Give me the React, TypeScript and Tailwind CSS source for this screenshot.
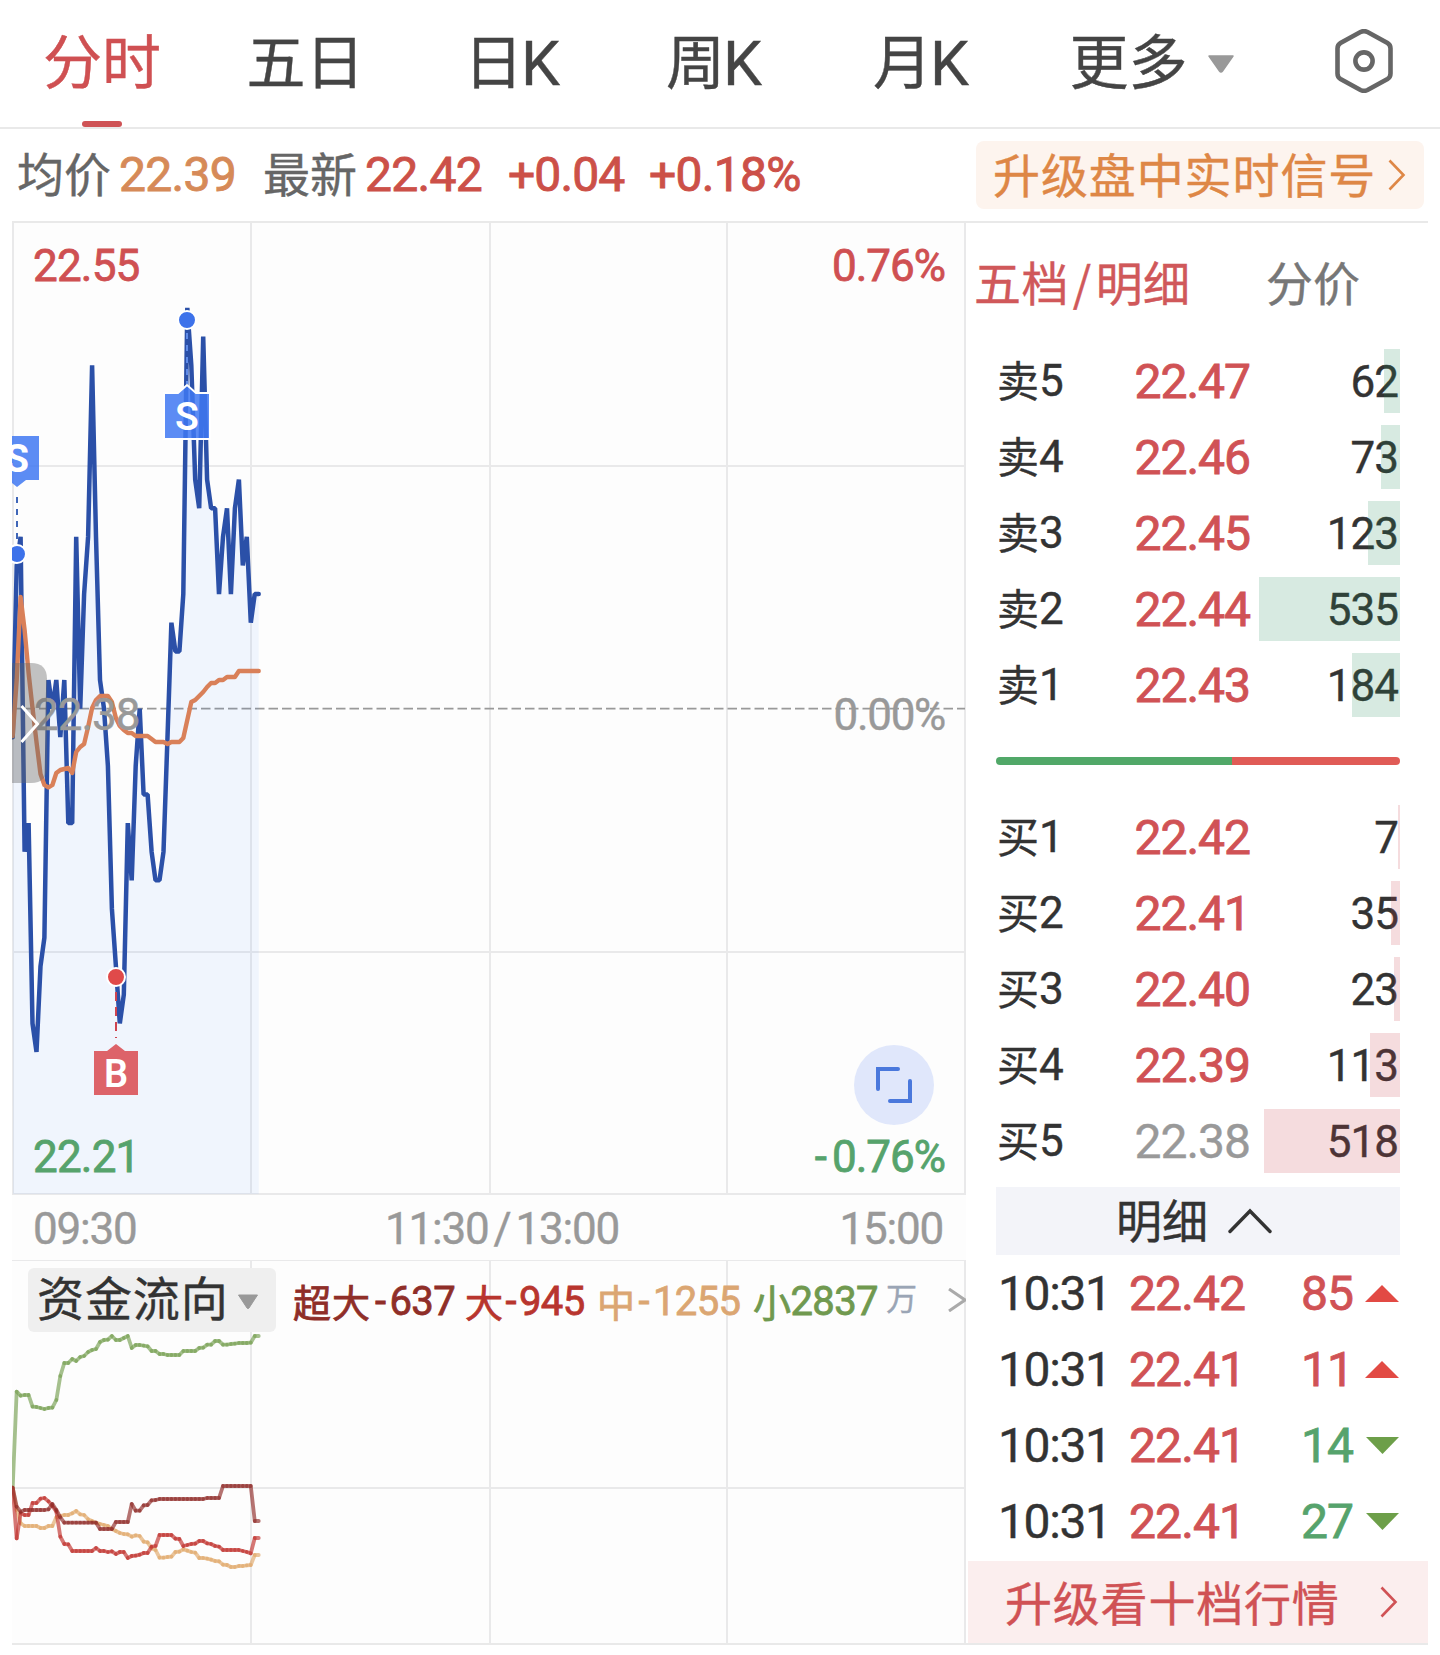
import clsx from 'clsx'

const TABS = ['五日', '日K', '周K', '月K']

const ASKS = [
  { label: '卖', level: 5, price: '22.47', volume: 62, bar: 16 },
  { label: '卖', level: 4, price: '22.46', volume: 73, bar: 19 },
  { label: '卖', level: 3, price: '22.45', volume: 123, bar: 32 },
  { label: '卖', level: 2, price: '22.44', volume: 535, bar: 141 },
  { label: '卖', level: 1, price: '22.43', volume: 184, bar: 48 },
]

const BIDS = [
  { label: '买', level: 1, price: '22.42', volume: 7, bar: 2 },
  { label: '买', level: 2, price: '22.41', volume: 35, bar: 9 },
  { label: '买', level: 3, price: '22.40', volume: 23, bar: 6 },
  { label: '买', level: 4, price: '22.39', volume: 113, bar: 30 },
  { label: '买', level: 5, price: '22.38', volume: 518, bar: 136 },
]

const TRADES = [
  { time: '10:31', price: '22.42', volume: 85, up: true },
  { time: '10:31', price: '22.41', volume: 11, up: true },
  { time: '10:31', price: '22.41', volume: 14, up: false },
  { time: '10:31', price: '22.41', volume: 27, up: false },
]

// price of every minute, in cents away from the previous close
const PRICE = [
  -1, 5, 6, -5, -4, -11, -12, -9, -8, 1, 0, 1, -1, 1, -4, -4, 6, 0, 4, 6, 12, 6, 1, 0, -2, -7, -9, -11, -10, -4, -6,
  -2, 0, -3, -3, -5, -6, -6, -5, -1, 3, 2, 2, 4, 14, 12, 8, 7, 13, 8, 7, 7, 4, 6, 7, 4, 7, 8, 5, 6, 3, 4, 4,
]

const AVERAGE = [
  736, 680, 597, 630, 673, 708, 742, 774, 785, 787.5, 785, 773, 770, 769, 768, 773, 752, 747, 744, 727, 708, 700, 696,
  696, 696, 702, 718, 726, 730, 733, 733, 736, 736, 736, 736, 739, 742, 742, 742, 744, 742, 742, 742, 738, 720, 702,
  700, 696, 692, 687, 683, 683, 680, 680, 677, 677, 677, 671, 671, 671, 671, 671, 671,
]

// money flow, thirds of a pixel below the pane's origin
const FLOWS = [
  {
    color: '#e0a868',
    points: [
      983, 1050, 1090, 1098, 1098, 1098, 1098, 1104, 1104, 1098, 1098, 1072, 1068, 1065, 1065, 1060, 1053, 1063, 1065,
      1078, 1083, 1088, 1092, 1095, 1098, 1107, 1113, 1119, 1122, 1123, 1130, 1126, 1128, 1145, 1147, 1165, 1170, 1193,
      1193, 1191, 1190, 1176, 1175, 1168, 1172, 1176, 1178, 1194, 1194, 1196, 1199, 1203, 1204, 1214, 1215, 1221, 1221,
      1218, 1218, 1216, 1215, 1185, 1185,
    ],
  },
  {
    color: '#76a052',
    points: [
      983, 695, 707, 705, 705, 740, 741, 744, 747, 744, 743, 720, 648, 609, 609, 597, 603, 591, 588, 576, 570, 567, 546,
      540, 539, 528, 540, 540, 534, 528, 564, 555, 555, 557, 559, 573, 573, 582, 582, 585, 585, 585, 585, 573, 573, 573,
      573, 564, 563, 554, 554, 543, 543, 554, 554, 552, 551, 549, 549, 549, 548, 528, 528,
    ],
  },
  {
    color: '#c0302b',
    points: [
      983, 1135, 1060, 1065, 1065, 1029, 1029, 1016, 1014, 1024, 1038, 1055, 1130, 1152, 1153, 1173, 1173, 1173, 1173,
      1173, 1173, 1164, 1173, 1173, 1176, 1174, 1182, 1176, 1176, 1194, 1188, 1187, 1184, 1179, 1179, 1160, 1158, 1125,
      1125, 1125, 1125, 1136, 1137, 1158, 1155, 1152, 1151, 1143, 1143, 1150, 1152, 1158, 1160, 1170, 1170, 1170, 1170,
      1170, 1173, 1176, 1180, 1134, 1134,
    ],
  },
  {
    color: '#8f2a26',
    points: [
      983, 1040, 1055, 1050, 1050, 1050, 1050, 1050, 1050, 1048, 1032, 1050, 1072, 1088, 1088, 1088, 1088, 1088, 1088,
      1088, 1088, 1088, 1107, 1107, 1107, 1107, 1086, 1086, 1086, 1086, 1032, 1052, 1052, 1036, 1035, 1021, 1020, 1017,
      1017, 1017, 1017, 1017, 1017, 1017, 1017, 1017, 1017, 1017, 1017, 1014, 1014, 1014, 1014, 978, 978, 978, 978, 978,
      978, 978, 978, 1083, 1083,
    ],
  },
]

const CLOSE_Y = 708.6
const minuteX = (i: number) => 12.7 + i * 3.968
const priceY = (cents: number) => CLOSE_Y - cents * 28.62
const flowY = (value: number) => 1160 + value / 3

const toPoints = (ys: number[]) => ys.map((y, i) => `${minuteX(i).toFixed(1)},${y.toFixed(1)}`).join(' ')

const Cn = ({ children, className }: { children: React.ReactNode; className?: string }) => (
  <span className={clsx("font-['Noto_Sans_CJK_SC',sans-serif] whitespace-nowrap", className)}>{children}</span>
)

const Chevron = ({ className }: { className?: string }) => (
  <svg width="18" height="32" viewBox="0 0 18 32" fill="none" stroke="currentColor" strokeWidth="2.6" className={className}>
    <path d="M1.5 1.5L15.5 16L1.5 30.5" />
  </svg>
)

const Tabs = () => (
  <nav className="grid h-[129px] grid-cols-[204px_203px_210px_194px_220px_238px_171px] border-b-2 border-[#e9e9e9] text-[59px] leading-[118px] text-[#444]">
    <div className="flex flex-col items-center text-[#cf5052]">
      <Cn className="h-[121px]">分时</Cn>
      <span className="h-1.5 w-10 rounded-full bg-[#cf5356]"></span>
    </div>
    {TABS.map((tab) => (
      <div key={tab} className="flex justify-center">
        <Cn>{tab.replace('K', '')}</Cn>
        {tab.endsWith('K') && <span className="-ml-0.5 text-[62px] leading-[127px]">K</span>}
      </div>
    ))}
    <div className="flex justify-center gap-[19px] pl-1">
      <Cn>更多</Cn>
      <svg width="28" height="18" viewBox="0 0 28 18" className="mt-[55px]">
        <path d="M2 1H26L15.5 16Q14 18 12.5 16Z" fill="#999" stroke="#999" strokeWidth="1.5" strokeLinejoin="round" />
      </svg>
    </div>
    <div className="flex justify-center pt-[29px] pl-[19px]">
      <svg width="60" height="64" viewBox="0 0 60 64" fill="none" stroke="#666" strokeWidth="4.6">
        <path d="M26.5 3Q30 1.2 33.5 3L53.5 14Q56.5 15.8 56.5 19.5V44.5Q56.5 48.2 53.5 50L33.5 61Q30 62.8 26.5 61L6.5 50Q3.5 48.2 3.5 44.5V19.5Q3.5 15.8 6.5 14Z" />
        <circle cx="30" cy="32" r="8.6" />
      </svg>
    </div>
  </nav>
)

const Summary = () => (
  <div className="flex h-[92px] items-center pl-[17px] text-[48px] text-[#cc5048]">
    <Cn className="-mt-1.5 w-[102px] text-[47px] text-[#666]">均价</Cn>
    <span className="w-[144px] tracking-[-0.7px] text-[#d68a58] [-webkit-text-stroke:0.9px]">22.39</span>
    <Cn className="-mt-1.5 w-[102px] text-[47px] text-[#666]">最新</Cn>
    <span className="w-[143px] tracking-[-0.7px] [-webkit-text-stroke:0.9px]">22.42</span>
    <span className="w-[141px] tracking-[-0.9px] [-webkit-text-stroke:0.9px]">+0.04</span>
    <span className="tracking-[-0.7px] [-webkit-text-stroke:0.9px]">+0.18%</span>
    <div className="mr-4 ml-auto flex h-[68px] w-[448px] items-center rounded-lg bg-[#fdf4ee] pl-[17px] text-[#de8746]">
      <Cn className="-mt-1 text-[47px] leading-[66px] tracking-[0.9px]">升级盘中实时信号</Cn>
      <Chevron className="ml-3" />
    </div>
  </div>
)

const PriceChart = () => (
  <div className="relative flex h-[972px] flex-col justify-between bg-[#fdfdfd] text-[44px] leading-[52px]">
    <svg width="954" height="972" viewBox="12 223 954 972" fill="none" className="absolute inset-0">
      <path d="M251 222V1195M490 222V1195M727 222V1195M12 466H966M12 952H966" stroke="#e9e9ea" strokeWidth="2" />
      <path d="M13 222V1194H965V222" stroke="#e9e9ea" strokeWidth="2" />
      <path d={`M12 ${CLOSE_Y}H965`} stroke="#999" strokeWidth="1.8" strokeDasharray="9.5 4" />
      <polygon
        points={`13,1194 ${toPoints(PRICE.map(priceY))} ${minuteX(62)},1194`}
        fill="#3c82ff"
        fillOpacity="0.068"
      />
      <polyline
        points={toPoints(PRICE.map(priceY))}
        stroke="#2b50a8"
        strokeWidth="4.5"
        strokeLinejoin="bevel"
        strokeLinecap="round"
      />
      <polyline points={toPoints(AVERAGE)} stroke="#d98059" strokeWidth="4.4" strokeLinejoin="round" strokeLinecap="round" />

      {/* sell at the open */}
      <path d="M17 497V546" stroke="#3f66b8" strokeWidth="2" strokeDasharray="6 6" />
      <circle cx="17" cy="554" r="9" fill="#3d72ea" stroke="#fff" strokeWidth="2" />
      <path d="M-5 436H39V480H26L17 487L8 480H-5Z" fill="#3f78f2" fillOpacity="0.85" />
      <text x="17" y="472" textAnchor="middle" fill="#fff" fontSize="39" fontWeight="700">S</text>

      {/* sell at the high */}
      <path d="M187 333V384" stroke="#5f8be8" strokeWidth="2" strokeDasharray="6 6" />
      <circle cx="187" cy="320" r="9" fill="#3d72ea" stroke="#fff" strokeWidth="2" />
      <path d="M164 393H178L187 385L196 393H210V439H164Z" fill="#3f78f2" fillOpacity="0.85" stroke="#fff" strokeWidth="2" />
      <text x="187" y="430" textAnchor="middle" fill="#fff" fontSize="39" fontWeight="600">S</text>

      {/* buy */}
      <path d="M116 992V1038" stroke="#cf4450" strokeWidth="2" strokeDasharray="9 6" />
      <circle cx="116" cy="977" r="9" fill="#e04a4a" stroke="#fff" strokeWidth="2" />
      <path d="M94 1051H107L116 1044L125 1051H138V1095H94Z" fill="#dd6369" />
      <text x="116" y="1086.5" textAnchor="middle" fill="#fff" fontSize="38" fontWeight="600">B</text>

      <circle cx="894" cy="1085" r="40" fill="#e0e7fb" />
      <path d="M898 1069H878V1089M910 1081V1101H890" stroke="#4a78dc" strokeWidth="4" strokeLinecap="round" />
    </svg>
    <div className="relative flex justify-between pt-[17px] pr-[21px] pl-[21px] tracking-[-0.8px] text-[#cf5052] [-webkit-text-stroke:0.8px]">
      <span>22.55</span>
      <span className="tracking-[-1px]">0.76%</span>
    </div>
    <div className="relative flex justify-between pt-1.5 pr-[21px] pl-[22px] tracking-[-1px] text-[#999]">
      <span>22.38</span>
      <span className="tracking-[-1.3px]">0.00%</span>
    </div>
    <div className="relative flex justify-between pr-[21px] pb-3 pl-[21px] tracking-[-0.8px] text-[#56a36c] [-webkit-text-stroke:0.8px]">
      <span>22.21</span>
      <span className="tracking-[-1px]"><span className="pr-1.5">-</span>0.76%</span>
    </div>
    <svg width="36" height="120" viewBox="12 663 36 120" fill="none" className="absolute top-[440px] left-0">
      <path d="M12 663H31Q47 663 47 679V767Q47 783 31 783H12Z" fill="#666" fillOpacity="0.4" />
      <path d="M21.5 706L37.5 724L21.5 742" stroke="#fff" strokeWidth="3" />
    </svg>
  </div>
)

const TimeAxis = () => (
  <div className="flex h-[65px] items-center justify-between bg-[#fdfdfd] pt-0.5 pr-[23px] pl-[21px] text-[44px] tracking-[-1.2px] text-[#999]">
    <span>09:30</span>
    <span className="pl-7">11:30<span className="px-[5px]">/</span>13:00</span>
    <span>15:00</span>
  </div>
)

const FlowChart = () => (
  <div className="relative h-[383px] overflow-hidden bg-[#fdfdfd]">
    <svg width="954" height="383" viewBox="12 1260 954 383" fill="none" className="absolute inset-0">
      <path d="M251 1260V1644M490 1260V1644M727 1260V1644M12 1488H966" stroke="#e9e9ea" strokeWidth="2" />
      <path d="M12 1260H966M965 1260V1644" stroke="#e9e9ea" strokeWidth="2" />
      {FLOWS.map(({ color, points }) => (
        <g key={color} stroke={color} strokeWidth="3.8" strokeLinecap="round" strokeOpacity="0.65">
          {points.slice(1).map((value, i) => (
            <line key={i} x1={minuteX(i)} y1={flowY(points[i])} x2={minuteX(i + 1)} y2={flowY(value)} />
          ))}
        </g>
      ))}
    </svg>
    <div className="relative flex items-center pt-2 pl-4 text-[40px] tracking-[-0.6px]">
      <div className="mr-[17px] flex h-16 w-[248px] shrink-0 items-center rounded-md bg-[#efefef] pl-[9px] text-[#333]">
        <Cn className="-mt-2 text-[47px] leading-[58px] tracking-[0.9px]">资金流向</Cn>
        <svg width="22" height="16" viewBox="0 0 22 16" className="mt-1 ml-2">
          <path d="M1.5 1H20.5L12 14Q11 15 10 14Z" fill="#999" stroke="#999" />
        </svg>
      </div>
      <span className="flex w-[172px] shrink-0 items-center pt-1 text-[#8f2e28] [-webkit-text-stroke:0.8px]">
        <Cn className="-mt-1 text-[38px] tracking-[1px]">超大</Cn><span className="px-1">-</span>637
      </span>
      <span className="flex w-[132px] shrink-0 items-center pt-1 text-[#b8352e] [-webkit-text-stroke:0.8px]">
        <Cn className="-mt-1 text-[38px]">大</Cn><span className="px-[3px]">-</span>945
      </span>
      <span className="flex w-[156px] shrink-0 items-center pt-1 text-[#dba672] [-webkit-text-stroke:0.8px]">
        <Cn className="-mt-1 text-[38px]">中</Cn><span className="px-1">-</span>1255
      </span>
      <span className="flex w-[133px] shrink-0 items-center pt-1 text-[#70994f] [-webkit-text-stroke:0.8px]">
        <Cn className="-mt-1 text-[38px]">小</Cn>2837
      </span>
      <Cn className="-mt-2 w-[62px] shrink-0 text-[31px] leading-[31px] text-[#9aa5b5]">万</Cn>
      <svg width="18" height="24" viewBox="0 0 18 24" fill="none" stroke="#aaa" strokeWidth="3" className="shrink-0">
        <path d="M1 1L17 12L1 23" />
      </svg>
    </div>
  </div>
)

type Level = (typeof ASKS)[number]

const Depth = ({ levels, barClass }: { levels: Level[]; barClass: string }) => (
  <div className="flex flex-col gap-3 text-[44px] text-[#333]">
    {levels.map(({ label, level, price, volume, bar }) => (
      <div key={level} className="relative flex h-16 items-center pl-px">
        <Cn className="-mt-1 w-[42px] text-[42px] leading-[60px]">{label}</Cn>
        <span className="w-[68px]">{level}</span>
        <span
          className={clsx(
            'w-[143px] pt-0.5 text-right text-[48px] tracking-[-1px]',
            price === '22.38' ? 'text-[#999]' : 'text-[#d05255] [-webkit-text-stroke:0.9px]',
          )}
        >
          {price}
        </span>
        <span className="ml-auto pt-px pr-0.5 tracking-[-1px]">{volume}</span>
        <span className={clsx('absolute inset-y-0 right-0', barClass)} style={{ width: bar }}></span>
      </div>
    ))}
  </div>
)

const OrderBook = () => (
  <aside className="flex w-[460px] flex-col">
    <div className="flex h-[126px] items-center pb-[9px] pl-1.5 text-[47px]">
      <Cn className="w-[292px] tracking-[0.4px] text-[#d0585a]">五档<span className="px-1">/</span>明细</Cn>
      <Cn className="text-[#777]">分价</Cn>
    </div>
    <div className="pr-7 pl-7">
      <Depth levels={ASKS} barClass="bg-[#228b57]/18" />
      <div className="my-10 flex h-2 overflow-hidden rounded-full">
        <span className="w-[236px] bg-[#51a868]"></span>
        <span className="flex-1 bg-[#e05b56]"></span>
      </div>
      <Depth levels={BIDS} barClass="bg-[#c83d48]/18" />
      <div className="mt-[14px] flex h-[68px] items-center bg-[#f3f4f9] pl-[120px] text-[#333]">
        <Cn className="-mt-1.5 text-[46px] leading-[62px]">明细</Cn>
        <svg width="44" height="26" viewBox="0 0 44 26" fill="none" stroke="#333" strokeWidth="3.4" className="ml-5">
          <path d="M2 23.5L22 3L42 23.5" strokeLinecap="round" />
        </svg>
      </div>
      {TRADES.map(({ time, price, volume, up }, i) => (
        <div key={i} className="flex h-[76px] items-center pt-0.5 text-[48px]">
          <span className="w-[133px] pl-0.5 tracking-[-1.4px] text-[#333]">{time}</span>
          <span className="w-[118px] tracking-[-0.9px] text-[#d05255] [-webkit-text-stroke:0.9px]">{price}</span>
          <span
            className={clsx('ml-auto tracking-[-1px] [-webkit-text-stroke:0.8px]', up ? 'text-[#d05255]' : 'text-[#56a36c]')}
          >
            {volume}
          </span>
          <svg width="34" height="18" viewBox="0 0 34 18" className="mr-px ml-3">
            {up ? <path d="M0 17L17 0L34 17Z" fill="#e24a44" /> : <path d="M1 0H34L17.5 17Z" fill="#6d9f49" />}
          </svg>
        </div>
      ))}
    </div>
    <div className="mt-0.5 flex h-[82px] items-center bg-[#fbeeee] pl-[37px] text-[#d05255]">
      <Cn className="-mt-[3px] text-[47px] leading-[78px] tracking-[0.8px]">升级看十档行情</Cn>
      <Chevron className="ml-10" />
    </div>
  </aside>
)

export default function App() {
  return (
    <div className="h-[1655px] w-[1440px] overflow-hidden bg-white font-['Roboto','Noto_Sans_CJK_SC',sans-serif] [-webkit-text-stroke:0.4px]">
      <Tabs />
      <Summary />
      <main className="ml-3 flex w-[1416px] border-y-2 border-[#e9e9e9]">
        <div className="mr-0.5 w-[954px]">
          <PriceChart />
          <TimeAxis />
          <FlowChart />
        </div>
        <OrderBook />
      </main>
    </div>
  )
}
